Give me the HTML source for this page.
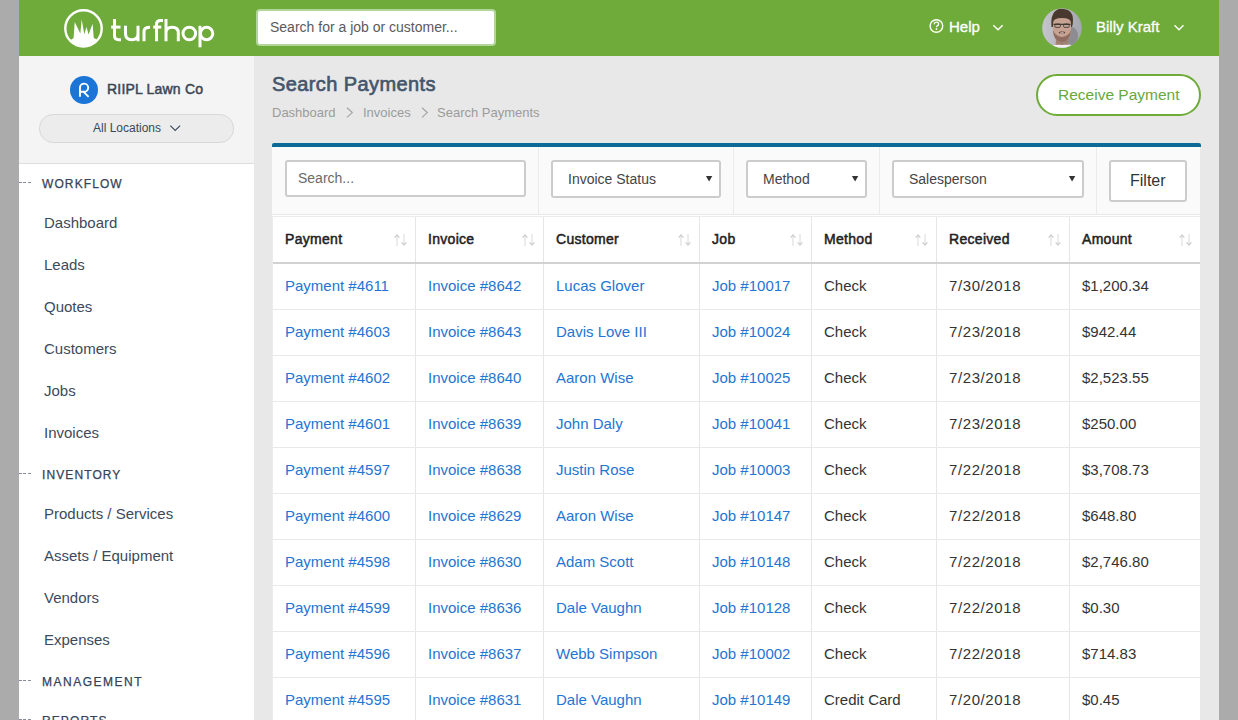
<!DOCTYPE html>
<html><head><meta charset="utf-8"><style>
html,body{margin:0;padding:0;width:1238px;height:720px;overflow:hidden;background:#ababab}
body{position:relative;font-family:"Liberation Sans", sans-serif}
.t{position:absolute;white-space:nowrap;line-height:40px;font-family:"Liberation Sans", sans-serif}
svg{overflow:visible}
</style></head><body>
<div style="position:absolute;left:0px;top:0px;width:19px;height:720px;box-sizing:border-box;background:#ababab"></div>
<div style="position:absolute;left:1219px;top:0px;width:19px;height:720px;box-sizing:border-box;background:#ababab"></div>
<div style="position:absolute;left:19px;top:0px;width:1200px;height:56px;box-sizing:border-box;background:#6fab3a"></div>
<div style="position:absolute;left:19px;top:56px;width:235px;height:108px;box-sizing:border-box;background:#f4f4f4;border-bottom:1px solid #dedede"></div>
<div style="position:absolute;left:19px;top:164px;width:235px;height:556px;box-sizing:border-box;background:#fff"></div>
<div style="position:absolute;left:254px;top:56px;width:965px;height:664px;box-sizing:border-box;background:#e8e8e8"></div>
<svg style="position:absolute;left:0px;top:0px" width="240" height="56" viewBox="0 0 240 56">
<defs><clipPath id="lc"><circle cx="83.5" cy="28.4" r="17.6"/></clipPath></defs>
<circle cx="83.5" cy="28.4" r="18.2" fill="none" stroke="#fff" stroke-width="2.4"/>
<g clip-path="url(#lc)"><path fill="#fff" d="M60,50 L60,40 L71.5,39.5 L73.6,38 L74.7,22 L80.3,33.5 L81.7,19.4 L84.3,34.2 L86.5,27 L88.6,34.5 L92.6,23.8 L93.8,38 L97,39.5 L110,40 L110,50 Z"/></g>
<g fill="none" stroke="#fff" stroke-width="3" stroke-linecap="butt">
<path d="M114.5,19 V35.5 Q114.5,39.7 118.5,39.7 H121"/>
<path d="M111.2,27.1 H120.5"/>
<path d="M125.5,25.8 V33.5 Q125.5,39.8 131.8,39.8 Q138,39.8 138,33.5 V25.8 M138,33 V41.2"/>
<path d="M144,41.2 V31.5 Q144,27.2 150,27.2"/>
<path d="M156.5,41.2 V24.5 Q156.5,20.5 160.5,20.5 H163"/>
<path d="M153.2,27.1 H161.3"/>
<path d="M166,19 V41.2 M166,32.5 Q166,27.2 172.2,27.2 Q178.3,27.2 178.3,32.5 V41.2"/>
<circle cx="189.3" cy="33.5" r="6.3"/>
<path d="M200,25.8 V47.3"/>
<circle cx="206.6" cy="33.5" r="6.2"/>
</g></svg>
<div style="position:absolute;left:256px;top:9px;width:240px;height:37px;box-sizing:border-box;background:#fff;border:2px solid #b3d59a;border-radius:4px"></div>
<div class="t" style="left:270px;top:7px;font-size:14px;font-weight:400;color:#5a5a5a;letter-spacing:0px;">Search for a job or customer...</div>
<svg style="position:absolute;left:920px;top:0px" width="300" height="56" viewBox="920 0 300 56">
<circle cx="936.4" cy="26" r="6.3" fill="none" stroke="#fff" stroke-width="1.4"/>
<path d="M934.3,24.2 Q934.3,22.2 936.4,22.2 Q938.6,22.2 938.6,24 Q938.6,25.3 937.3,25.9 Q936.5,26.3 936.5,27.3" fill="none" stroke="#fff" stroke-width="1.3"/>
<rect x="935.7" y="28.3" width="1.6" height="1.6" fill="#fff"/>
<path d="M993.3,25.2 L998,29.8 L1002.7,25.2" fill="none" stroke="#fff" stroke-width="1.4"/>
<path d="M1174.5,25.2 L1179,29.8 L1183.5,25.2" fill="none" stroke="#fff" stroke-width="1.4"/>
<defs><clipPath id="av"><circle cx="1062" cy="28" r="19.8"/></clipPath>
<filter id="bl" x="-20%" y="-20%" width="140%" height="140%"><feGaussianBlur stdDeviation="0.7"/></filter>
<linearGradient id="avbg" x1="0" y1="0" x2="1" y2="0"><stop offset="0" stop-color="#c6c6ce"/><stop offset="0.55" stop-color="#b4b4bc"/><stop offset="1" stop-color="#a4a4ac"/></linearGradient></defs>
<g clip-path="url(#av)">
<rect x="1040" y="6" width="44" height="44" fill="url(#avbg)"/>
<g filter="url(#bl)">
<ellipse cx="1072" cy="36" rx="6" ry="9" fill="#8c8c92"/>
<path d="M1055,50 L1056,40 H1068 L1069,50 Z" fill="#a08070"/>
<path d="M1051.5,27 Q1050,11 1060,8.8 Q1073,8.5 1073,20 Q1073,24 1072,27 Z" fill="#4a382e"/>
<path d="M1053,23 Q1053,18 1062,18 Q1071,18 1071,23 V30 Q1071,41.5 1062,41.5 Q1053,41.5 1053,30 Z" fill="#c7a292"/>
<path d="M1053,30 Q1053.5,41.5 1062,42 Q1070.5,41.5 1071,30 Q1069,36 1062,37 Q1055,36 1053,30 Z" fill="#8e6c5e"/>
<path d="M1053.5,24.3 H1070.5" stroke="#2e2a2a" stroke-width="1.1"/>
<rect x="1054.8" y="24" width="5.6" height="3.4" rx="1.2" fill="none" stroke="#333" stroke-width="0.8"/>
<rect x="1063.6" y="24" width="5.6" height="3.4" rx="1.2" fill="none" stroke="#333" stroke-width="0.8"/>
<ellipse cx="1062" cy="32.6" rx="3.2" ry="1.2" fill="#5a3a36"/>
<ellipse cx="1062" cy="32.9" rx="2.2" ry="0.6" fill="#e0d0c8"/>
<path d="M1044,50 Q1050,44 1062,45 Q1074,44 1080,50 Z" fill="#f2f0f0"/>
</g>
</g></svg>
<div class="t" style="left:1096px;top:7px;font-size:15px;font-weight:400;color:#fff;letter-spacing:0px;-webkit-text-stroke:0.3px #fff">Billy Kraft</div>
<div class="t" style="left:949px;top:7px;font-size:15px;font-weight:400;color:#fff;letter-spacing:0px;-webkit-text-stroke:0.3px #fff">Help</div>
<div class="t" style="left:107px;top:69px;font-size:14px;font-weight:400;color:#3a4657;letter-spacing:0.2px;-webkit-text-stroke:0.5px #3a4657">RIIPL Lawn Co</div>
<div style="position:absolute;left:39px;top:114px;width:195px;height:29px;box-sizing:border-box;background:#ececec;border:1px solid #d8d8d8;border-radius:14px"></div>
<div class="t" style="left:93px;top:108px;font-size:12px;font-weight:400;color:#3c475a;letter-spacing:0px;">All Locations</div>
<svg style="position:absolute;left:0px;top:56px" width="254" height="108" viewBox="0 56 254 108">
<circle cx="84" cy="90" r="14" fill="#1b75d7"/>
<path d="M80,96.8 V87.6 A4.1,4.1 0 1 1 84.1,91.8 H80.5 M83.6,91.8 L88.6,96.8" fill="none" stroke="#fff" stroke-width="1.9"/>
<path d="M170.3,125.7 L175.2,130.5 L180.1,125.7" fill="none" stroke="#3c475a" stroke-width="1.1"/>
</svg>
<div class="t" style="left:42px;top:164px;font-size:12px;font-weight:400;color:#34425a;letter-spacing:1.1px;-webkit-text-stroke:0.25px #34425a">WORKFLOW</div>
<div style="position:absolute;left:19px;top:182px;width:12px;height:1px;box-sizing:border-box;background:repeating-linear-gradient(90deg,#858c97 0 3px,transparent 3px 4.3px)"></div>
<div class="t" style="left:44px;top:203px;font-size:15px;font-weight:400;color:#3d4a5b;letter-spacing:0px;">Dashboard</div>
<div class="t" style="left:44px;top:245px;font-size:15px;font-weight:400;color:#3d4a5b;letter-spacing:0px;">Leads</div>
<div class="t" style="left:44px;top:287px;font-size:15px;font-weight:400;color:#3d4a5b;letter-spacing:0px;">Quotes</div>
<div class="t" style="left:44px;top:329px;font-size:15px;font-weight:400;color:#3d4a5b;letter-spacing:0px;">Customers</div>
<div class="t" style="left:44px;top:371px;font-size:15px;font-weight:400;color:#3d4a5b;letter-spacing:0px;">Jobs</div>
<div class="t" style="left:44px;top:413px;font-size:15px;font-weight:400;color:#3d4a5b;letter-spacing:0px;">Invoices</div>
<div class="t" style="left:42px;top:455px;font-size:12px;font-weight:400;color:#34425a;letter-spacing:1.1px;-webkit-text-stroke:0.25px #34425a">INVENTORY</div>
<div style="position:absolute;left:19px;top:473px;width:12px;height:1px;box-sizing:border-box;background:repeating-linear-gradient(90deg,#858c97 0 3px,transparent 3px 4.3px)"></div>
<div class="t" style="left:44px;top:494px;font-size:15px;font-weight:400;color:#3d4a5b;letter-spacing:0px;">Products / Services</div>
<div class="t" style="left:44px;top:536px;font-size:15px;font-weight:400;color:#3d4a5b;letter-spacing:0px;">Assets / Equipment</div>
<div class="t" style="left:44px;top:578px;font-size:15px;font-weight:400;color:#3d4a5b;letter-spacing:0px;">Vendors</div>
<div class="t" style="left:44px;top:620px;font-size:15px;font-weight:400;color:#3d4a5b;letter-spacing:0px;">Expenses</div>
<div class="t" style="left:42px;top:662px;font-size:12px;font-weight:400;color:#34425a;letter-spacing:1.5px;-webkit-text-stroke:0.25px #34425a">MANAGEMENT</div>
<div style="position:absolute;left:19px;top:680px;width:12px;height:1px;box-sizing:border-box;background:repeating-linear-gradient(90deg,#858c97 0 3px,transparent 3px 4.3px)"></div>
<div class="t" style="left:42px;top:701px;font-size:12px;font-weight:400;color:#34425a;letter-spacing:1.1px;-webkit-text-stroke:0.25px #34425a">REPORTS</div>
<div style="position:absolute;left:19px;top:719px;width:12px;height:1px;box-sizing:border-box;background:repeating-linear-gradient(90deg,#858c97 0 3px,transparent 3px 4.3px)"></div>
<div class="t" style="left:272px;top:64px;font-size:20px;font-weight:400;color:#44556c;letter-spacing:0.4px;-webkit-text-stroke:0.65px #44556c">Search Payments</div>
<div class="t" style="left:272px;top:93px;font-size:13px;font-weight:400;color:#9b9b9b;letter-spacing:0px;">Dashboard</div>
<div class="t" style="left:363px;top:93px;font-size:13px;font-weight:400;color:#9b9b9b;letter-spacing:0px;">Invoices</div>
<div class="t" style="left:437px;top:93px;font-size:13px;font-weight:400;color:#9b9b9b;letter-spacing:0px;">Search Payments</div>
<svg style="position:absolute;left:340px;top:100px" width="100" height="24" viewBox="340 100 100 24">
<path d="M347,107.8 L352.3,112.6 L347,117.4" fill="none" stroke="#a4a4a4" stroke-width="1.2"/>
<path d="M422,107.8 L427.3,112.6 L422,117.4" fill="none" stroke="#a4a4a4" stroke-width="1.2"/>
</svg>
<div style="position:absolute;left:1036px;top:74px;width:165px;height:42px;box-sizing:border-box;background:#fff;border:2px solid #6eab38;border-radius:21px"></div>
<div class="t" style="left:1058px;top:75px;font-size:15.5px;font-weight:400;color:#6aa83a;letter-spacing:0px;">Receive Payment</div>
<div style="position:absolute;left:272px;top:143px;width:929px;height:4px;box-sizing:border-box;background:#0b6b96;border-radius:2px 2px 0 0"></div>
<div style="position:absolute;left:272px;top:147px;width:928px;height:68px;box-sizing:border-box;background:#fafafa;border-bottom:1px solid #e8e8e8"></div>
<div style="position:absolute;left:538px;top:147px;width:1px;height:67px;box-sizing:border-box;background:#ebebeb"></div>
<div style="position:absolute;left:733px;top:147px;width:1px;height:67px;box-sizing:border-box;background:#ebebeb"></div>
<div style="position:absolute;left:879px;top:147px;width:1px;height:67px;box-sizing:border-box;background:#ebebeb"></div>
<div style="position:absolute;left:1096px;top:147px;width:1px;height:67px;box-sizing:border-box;background:#ebebeb"></div>
<div style="position:absolute;left:272px;top:215px;width:928px;height:505px;box-sizing:border-box;background:#fff"></div>
<div style="position:absolute;left:272px;top:216px;width:928px;height:1px;box-sizing:border-box;background:#ececec"></div>
<div style="position:absolute;left:285px;top:160px;width:241px;height:37px;box-sizing:border-box;background:#fff;border:2px solid #cccccc;border-radius:3px"></div>
<div class="t" style="left:298px;top:158px;font-size:14px;font-weight:400;color:#6a6a6a;letter-spacing:0px;">Search...</div>
<div style="position:absolute;left:551px;top:160px;width:170px;height:38px;box-sizing:border-box;background:#fff;border:2px solid #cccccc;border-radius:3px"></div>
<div class="t" style="left:568px;top:159px;font-size:14px;font-weight:400;color:#444;letter-spacing:0px;">Invoice Status</div>
<svg style="position:absolute;left:705px;top:174px" width="10" height="10"><path d="M0.9,2 H7.3 L4.1,7.6 Z" fill="#333"/></svg>
<div style="position:absolute;left:746px;top:160px;width:121px;height:38px;box-sizing:border-box;background:#fff;border:2px solid #cccccc;border-radius:3px"></div>
<div class="t" style="left:763px;top:159px;font-size:14px;font-weight:400;color:#444;letter-spacing:0px;">Method</div>
<svg style="position:absolute;left:851px;top:174px" width="10" height="10"><path d="M0.9,2 H7.3 L4.1,7.6 Z" fill="#333"/></svg>
<div style="position:absolute;left:892px;top:160px;width:192px;height:38px;box-sizing:border-box;background:#fff;border:2px solid #cccccc;border-radius:3px"></div>
<div class="t" style="left:909px;top:159px;font-size:14px;font-weight:400;color:#444;letter-spacing:0px;">Salesperson</div>
<svg style="position:absolute;left:1068px;top:174px" width="10" height="10"><path d="M0.9,2 H7.3 L4.1,7.6 Z" fill="#333"/></svg>
<div style="position:absolute;left:1109px;top:160px;width:78px;height:42px;box-sizing:border-box;background:#fff;border:2px solid #cccccc;border-radius:3px"></div>
<div class="t" style="left:1130px;top:161px;font-size:16px;font-weight:400;color:#333;letter-spacing:0px;">Filter</div>
<div style="position:absolute;left:415px;top:217px;width:1px;height:503px;box-sizing:border-box;background:#e6e6e6"></div>
<div style="position:absolute;left:543px;top:217px;width:1px;height:503px;box-sizing:border-box;background:#e6e6e6"></div>
<div style="position:absolute;left:699px;top:217px;width:1px;height:503px;box-sizing:border-box;background:#e6e6e6"></div>
<div style="position:absolute;left:811px;top:217px;width:1px;height:503px;box-sizing:border-box;background:#e6e6e6"></div>
<div style="position:absolute;left:936px;top:217px;width:1px;height:503px;box-sizing:border-box;background:#e6e6e6"></div>
<div style="position:absolute;left:1069px;top:217px;width:1px;height:503px;box-sizing:border-box;background:#e6e6e6"></div>
<div style="position:absolute;left:272px;top:262px;width:928px;height:2px;box-sizing:border-box;background:#d2d2d2"></div>
<div style="position:absolute;left:272px;top:217px;width:1px;height:503px;box-sizing:border-box;background:#ececec"></div>
<div class="t" style="left:285px;top:219px;font-size:14px;font-weight:400;color:#222;letter-spacing:0.3px;-webkit-text-stroke:0.5px #222">Payment</div>
<svg style="position:absolute;left:393px;top:232px" width="16" height="16" viewBox="0 0 16 16">
<path d="M4,3.5 V14" stroke="#e4e4e4" stroke-width="1.4"/>
<path d="M1.6,5.6 L4,3 L6.4,5.6" fill="none" stroke="#cdcdcd" stroke-width="1.2"/>
<path d="M11,2 V12.5" stroke="#e4e4e4" stroke-width="1.4"/>
<path d="M8.6,10.4 L11,13 L13.4,10.4" fill="none" stroke="#cdcdcd" stroke-width="1.2"/>
</svg>
<div class="t" style="left:428px;top:219px;font-size:14px;font-weight:400;color:#222;letter-spacing:0.3px;-webkit-text-stroke:0.5px #222">Invoice</div>
<svg style="position:absolute;left:521px;top:232px" width="16" height="16" viewBox="0 0 16 16">
<path d="M4,3.5 V14" stroke="#e4e4e4" stroke-width="1.4"/>
<path d="M1.6,5.6 L4,3 L6.4,5.6" fill="none" stroke="#cdcdcd" stroke-width="1.2"/>
<path d="M11,2 V12.5" stroke="#e4e4e4" stroke-width="1.4"/>
<path d="M8.6,10.4 L11,13 L13.4,10.4" fill="none" stroke="#cdcdcd" stroke-width="1.2"/>
</svg>
<div class="t" style="left:556px;top:219px;font-size:14px;font-weight:400;color:#222;letter-spacing:0.3px;-webkit-text-stroke:0.5px #222">Customer</div>
<svg style="position:absolute;left:677px;top:232px" width="16" height="16" viewBox="0 0 16 16">
<path d="M4,3.5 V14" stroke="#e4e4e4" stroke-width="1.4"/>
<path d="M1.6,5.6 L4,3 L6.4,5.6" fill="none" stroke="#cdcdcd" stroke-width="1.2"/>
<path d="M11,2 V12.5" stroke="#e4e4e4" stroke-width="1.4"/>
<path d="M8.6,10.4 L11,13 L13.4,10.4" fill="none" stroke="#cdcdcd" stroke-width="1.2"/>
</svg>
<div class="t" style="left:712px;top:219px;font-size:14px;font-weight:400;color:#222;letter-spacing:0.3px;-webkit-text-stroke:0.5px #222">Job</div>
<svg style="position:absolute;left:789px;top:232px" width="16" height="16" viewBox="0 0 16 16">
<path d="M4,3.5 V14" stroke="#e4e4e4" stroke-width="1.4"/>
<path d="M1.6,5.6 L4,3 L6.4,5.6" fill="none" stroke="#cdcdcd" stroke-width="1.2"/>
<path d="M11,2 V12.5" stroke="#e4e4e4" stroke-width="1.4"/>
<path d="M8.6,10.4 L11,13 L13.4,10.4" fill="none" stroke="#cdcdcd" stroke-width="1.2"/>
</svg>
<div class="t" style="left:824px;top:219px;font-size:14px;font-weight:400;color:#222;letter-spacing:0.3px;-webkit-text-stroke:0.5px #222">Method</div>
<svg style="position:absolute;left:914px;top:232px" width="16" height="16" viewBox="0 0 16 16">
<path d="M4,3.5 V14" stroke="#e4e4e4" stroke-width="1.4"/>
<path d="M1.6,5.6 L4,3 L6.4,5.6" fill="none" stroke="#cdcdcd" stroke-width="1.2"/>
<path d="M11,2 V12.5" stroke="#e4e4e4" stroke-width="1.4"/>
<path d="M8.6,10.4 L11,13 L13.4,10.4" fill="none" stroke="#cdcdcd" stroke-width="1.2"/>
</svg>
<div class="t" style="left:949px;top:219px;font-size:14px;font-weight:400;color:#222;letter-spacing:0.3px;-webkit-text-stroke:0.5px #222">Received</div>
<svg style="position:absolute;left:1047px;top:232px" width="16" height="16" viewBox="0 0 16 16">
<path d="M4,3.5 V14" stroke="#e4e4e4" stroke-width="1.4"/>
<path d="M1.6,5.6 L4,3 L6.4,5.6" fill="none" stroke="#cdcdcd" stroke-width="1.2"/>
<path d="M11,2 V12.5" stroke="#e4e4e4" stroke-width="1.4"/>
<path d="M8.6,10.4 L11,13 L13.4,10.4" fill="none" stroke="#cdcdcd" stroke-width="1.2"/>
</svg>
<div class="t" style="left:1082px;top:219px;font-size:14px;font-weight:400;color:#222;letter-spacing:0.3px;-webkit-text-stroke:0.5px #222">Amount</div>
<svg style="position:absolute;left:1178px;top:232px" width="16" height="16" viewBox="0 0 16 16">
<path d="M4,3.5 V14" stroke="#e4e4e4" stroke-width="1.4"/>
<path d="M1.6,5.6 L4,3 L6.4,5.6" fill="none" stroke="#cdcdcd" stroke-width="1.2"/>
<path d="M11,2 V12.5" stroke="#e4e4e4" stroke-width="1.4"/>
<path d="M8.6,10.4 L11,13 L13.4,10.4" fill="none" stroke="#cdcdcd" stroke-width="1.2"/>
</svg>
<div style="position:absolute;left:273px;top:309px;width:927px;height:1px;box-sizing:border-box;background:#e9e9e9"></div>
<div class="t" style="left:285px;top:266px;font-size:15px;font-weight:400;color:#2475d3;letter-spacing:0px;">Payment #4611</div>
<div class="t" style="left:428px;top:266px;font-size:15px;font-weight:400;color:#2475d3;letter-spacing:0px;">Invoice #8642</div>
<div class="t" style="left:556px;top:266px;font-size:15px;font-weight:400;color:#2475d3;letter-spacing:0px;">Lucas Glover</div>
<div class="t" style="left:712px;top:266px;font-size:15px;font-weight:400;color:#2475d3;letter-spacing:0px;">Job #10017</div>
<div class="t" style="left:824px;top:266px;font-size:15px;font-weight:400;color:#333;letter-spacing:0px;">Check</div>
<div class="t" style="left:949px;top:266px;font-size:15px;font-weight:400;color:#333;letter-spacing:0.6px;">7/30/2018</div>
<div class="t" style="left:1082px;top:266px;font-size:15px;font-weight:400;color:#333;letter-spacing:0px;">$1,200.34</div>
<div style="position:absolute;left:273px;top:355px;width:927px;height:1px;box-sizing:border-box;background:#e9e9e9"></div>
<div class="t" style="left:285px;top:312px;font-size:15px;font-weight:400;color:#2475d3;letter-spacing:0px;">Payment #4603</div>
<div class="t" style="left:428px;top:312px;font-size:15px;font-weight:400;color:#2475d3;letter-spacing:0px;">Invoice #8643</div>
<div class="t" style="left:556px;top:312px;font-size:15px;font-weight:400;color:#2475d3;letter-spacing:0px;">Davis Love III</div>
<div class="t" style="left:712px;top:312px;font-size:15px;font-weight:400;color:#2475d3;letter-spacing:0px;">Job #10024</div>
<div class="t" style="left:824px;top:312px;font-size:15px;font-weight:400;color:#333;letter-spacing:0px;">Check</div>
<div class="t" style="left:949px;top:312px;font-size:15px;font-weight:400;color:#333;letter-spacing:0.6px;">7/23/2018</div>
<div class="t" style="left:1082px;top:312px;font-size:15px;font-weight:400;color:#333;letter-spacing:0px;">$942.44</div>
<div style="position:absolute;left:273px;top:401px;width:927px;height:1px;box-sizing:border-box;background:#e9e9e9"></div>
<div class="t" style="left:285px;top:358px;font-size:15px;font-weight:400;color:#2475d3;letter-spacing:0px;">Payment #4602</div>
<div class="t" style="left:428px;top:358px;font-size:15px;font-weight:400;color:#2475d3;letter-spacing:0px;">Invoice #8640</div>
<div class="t" style="left:556px;top:358px;font-size:15px;font-weight:400;color:#2475d3;letter-spacing:0px;">Aaron Wise</div>
<div class="t" style="left:712px;top:358px;font-size:15px;font-weight:400;color:#2475d3;letter-spacing:0px;">Job #10025</div>
<div class="t" style="left:824px;top:358px;font-size:15px;font-weight:400;color:#333;letter-spacing:0px;">Check</div>
<div class="t" style="left:949px;top:358px;font-size:15px;font-weight:400;color:#333;letter-spacing:0.6px;">7/23/2018</div>
<div class="t" style="left:1082px;top:358px;font-size:15px;font-weight:400;color:#333;letter-spacing:0px;">$2,523.55</div>
<div style="position:absolute;left:273px;top:447px;width:927px;height:1px;box-sizing:border-box;background:#e9e9e9"></div>
<div class="t" style="left:285px;top:404px;font-size:15px;font-weight:400;color:#2475d3;letter-spacing:0px;">Payment #4601</div>
<div class="t" style="left:428px;top:404px;font-size:15px;font-weight:400;color:#2475d3;letter-spacing:0px;">Invoice #8639</div>
<div class="t" style="left:556px;top:404px;font-size:15px;font-weight:400;color:#2475d3;letter-spacing:0px;">John Daly</div>
<div class="t" style="left:712px;top:404px;font-size:15px;font-weight:400;color:#2475d3;letter-spacing:0px;">Job #10041</div>
<div class="t" style="left:824px;top:404px;font-size:15px;font-weight:400;color:#333;letter-spacing:0px;">Check</div>
<div class="t" style="left:949px;top:404px;font-size:15px;font-weight:400;color:#333;letter-spacing:0.6px;">7/23/2018</div>
<div class="t" style="left:1082px;top:404px;font-size:15px;font-weight:400;color:#333;letter-spacing:0px;">$250.00</div>
<div style="position:absolute;left:273px;top:493px;width:927px;height:1px;box-sizing:border-box;background:#e9e9e9"></div>
<div class="t" style="left:285px;top:450px;font-size:15px;font-weight:400;color:#2475d3;letter-spacing:0px;">Payment #4597</div>
<div class="t" style="left:428px;top:450px;font-size:15px;font-weight:400;color:#2475d3;letter-spacing:0px;">Invoice #8638</div>
<div class="t" style="left:556px;top:450px;font-size:15px;font-weight:400;color:#2475d3;letter-spacing:0px;">Justin Rose</div>
<div class="t" style="left:712px;top:450px;font-size:15px;font-weight:400;color:#2475d3;letter-spacing:0px;">Job #10003</div>
<div class="t" style="left:824px;top:450px;font-size:15px;font-weight:400;color:#333;letter-spacing:0px;">Check</div>
<div class="t" style="left:949px;top:450px;font-size:15px;font-weight:400;color:#333;letter-spacing:0.6px;">7/22/2018</div>
<div class="t" style="left:1082px;top:450px;font-size:15px;font-weight:400;color:#333;letter-spacing:0px;">$3,708.73</div>
<div style="position:absolute;left:273px;top:539px;width:927px;height:1px;box-sizing:border-box;background:#e9e9e9"></div>
<div class="t" style="left:285px;top:496px;font-size:15px;font-weight:400;color:#2475d3;letter-spacing:0px;">Payment #4600</div>
<div class="t" style="left:428px;top:496px;font-size:15px;font-weight:400;color:#2475d3;letter-spacing:0px;">Invoice #8629</div>
<div class="t" style="left:556px;top:496px;font-size:15px;font-weight:400;color:#2475d3;letter-spacing:0px;">Aaron Wise</div>
<div class="t" style="left:712px;top:496px;font-size:15px;font-weight:400;color:#2475d3;letter-spacing:0px;">Job #10147</div>
<div class="t" style="left:824px;top:496px;font-size:15px;font-weight:400;color:#333;letter-spacing:0px;">Check</div>
<div class="t" style="left:949px;top:496px;font-size:15px;font-weight:400;color:#333;letter-spacing:0.6px;">7/22/2018</div>
<div class="t" style="left:1082px;top:496px;font-size:15px;font-weight:400;color:#333;letter-spacing:0px;">$648.80</div>
<div style="position:absolute;left:273px;top:585px;width:927px;height:1px;box-sizing:border-box;background:#e9e9e9"></div>
<div class="t" style="left:285px;top:542px;font-size:15px;font-weight:400;color:#2475d3;letter-spacing:0px;">Payment #4598</div>
<div class="t" style="left:428px;top:542px;font-size:15px;font-weight:400;color:#2475d3;letter-spacing:0px;">Invoice #8630</div>
<div class="t" style="left:556px;top:542px;font-size:15px;font-weight:400;color:#2475d3;letter-spacing:0px;">Adam Scott</div>
<div class="t" style="left:712px;top:542px;font-size:15px;font-weight:400;color:#2475d3;letter-spacing:0px;">Job #10148</div>
<div class="t" style="left:824px;top:542px;font-size:15px;font-weight:400;color:#333;letter-spacing:0px;">Check</div>
<div class="t" style="left:949px;top:542px;font-size:15px;font-weight:400;color:#333;letter-spacing:0.6px;">7/22/2018</div>
<div class="t" style="left:1082px;top:542px;font-size:15px;font-weight:400;color:#333;letter-spacing:0px;">$2,746.80</div>
<div style="position:absolute;left:273px;top:631px;width:927px;height:1px;box-sizing:border-box;background:#e9e9e9"></div>
<div class="t" style="left:285px;top:588px;font-size:15px;font-weight:400;color:#2475d3;letter-spacing:0px;">Payment #4599</div>
<div class="t" style="left:428px;top:588px;font-size:15px;font-weight:400;color:#2475d3;letter-spacing:0px;">Invoice #8636</div>
<div class="t" style="left:556px;top:588px;font-size:15px;font-weight:400;color:#2475d3;letter-spacing:0px;">Dale Vaughn</div>
<div class="t" style="left:712px;top:588px;font-size:15px;font-weight:400;color:#2475d3;letter-spacing:0px;">Job #10128</div>
<div class="t" style="left:824px;top:588px;font-size:15px;font-weight:400;color:#333;letter-spacing:0px;">Check</div>
<div class="t" style="left:949px;top:588px;font-size:15px;font-weight:400;color:#333;letter-spacing:0.6px;">7/22/2018</div>
<div class="t" style="left:1082px;top:588px;font-size:15px;font-weight:400;color:#333;letter-spacing:0px;">$0.30</div>
<div style="position:absolute;left:273px;top:677px;width:927px;height:1px;box-sizing:border-box;background:#e9e9e9"></div>
<div class="t" style="left:285px;top:634px;font-size:15px;font-weight:400;color:#2475d3;letter-spacing:0px;">Payment #4596</div>
<div class="t" style="left:428px;top:634px;font-size:15px;font-weight:400;color:#2475d3;letter-spacing:0px;">Invoice #8637</div>
<div class="t" style="left:556px;top:634px;font-size:15px;font-weight:400;color:#2475d3;letter-spacing:0px;">Webb Simpson</div>
<div class="t" style="left:712px;top:634px;font-size:15px;font-weight:400;color:#2475d3;letter-spacing:0px;">Job #10002</div>
<div class="t" style="left:824px;top:634px;font-size:15px;font-weight:400;color:#333;letter-spacing:0px;">Check</div>
<div class="t" style="left:949px;top:634px;font-size:15px;font-weight:400;color:#333;letter-spacing:0.6px;">7/22/2018</div>
<div class="t" style="left:1082px;top:634px;font-size:15px;font-weight:400;color:#333;letter-spacing:0px;">$714.83</div>
<div style="position:absolute;left:273px;top:723px;width:927px;height:1px;box-sizing:border-box;background:#e9e9e9"></div>
<div class="t" style="left:285px;top:680px;font-size:15px;font-weight:400;color:#2475d3;letter-spacing:0px;">Payment #4595</div>
<div class="t" style="left:428px;top:680px;font-size:15px;font-weight:400;color:#2475d3;letter-spacing:0px;">Invoice #8631</div>
<div class="t" style="left:556px;top:680px;font-size:15px;font-weight:400;color:#2475d3;letter-spacing:0px;">Dale Vaughn</div>
<div class="t" style="left:712px;top:680px;font-size:15px;font-weight:400;color:#2475d3;letter-spacing:0px;">Job #10149</div>
<div class="t" style="left:824px;top:680px;font-size:15px;font-weight:400;color:#333;letter-spacing:0px;">Credit Card</div>
<div class="t" style="left:949px;top:680px;font-size:15px;font-weight:400;color:#333;letter-spacing:0.6px;">7/20/2018</div>
<div class="t" style="left:1082px;top:680px;font-size:15px;font-weight:400;color:#333;letter-spacing:0px;">$0.45</div>
</body></html>
